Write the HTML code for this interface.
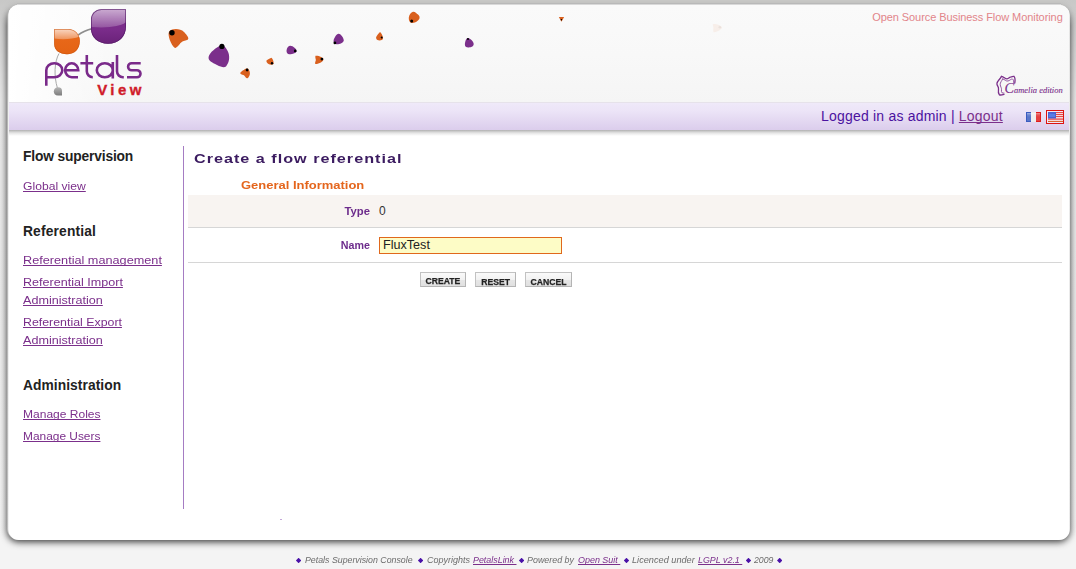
<!DOCTYPE html>
<html>
<head>
<meta charset="utf-8">
<title>Petals View - Create a flow referential</title>
<style>
*{box-sizing:border-box;margin:0;padding:0}
html,body{width:1076px;height:569px;overflow:hidden}
body{font-family:"Liberation Sans",sans-serif;position:relative;
 background:linear-gradient(to bottom,#c8c8c7 0,#d6d6d6 45px,#e9e9e9 100px,#ececec 300px,#f4f4f4 540px,#f4f4f4 569px);}
a{color:#7b2f8b;text-decoration:underline;text-decoration-skip-ink:none}
#wrap{position:absolute;left:8px;top:5px;width:1062px;height:535px;background:linear-gradient(to right,rgba(255,255,255,.78) 0,rgba(255,255,255,.78) 1px,#fff 1px,#fff 1061px,rgba(255,255,255,.72) 1061px);border-radius:11px;overflow:hidden}
#shw{position:absolute;left:0;top:0;width:1076px;height:569px;-webkit-mask-image:linear-gradient(to bottom,rgba(0,0,0,.3) 0,rgba(0,0,0,.4) 6px,#000 26px);mask-image:linear-gradient(to bottom,rgba(0,0,0,.3) 0,rgba(0,0,0,.4) 6px,#000 26px)}
#sh{position:absolute;left:7px;top:5px;width:1063px;height:535px;border-radius:12px;background:rgba(0,0,0,.22);box-shadow:0 2px 7px rgba(0,0,0,.78)}
#topcover{position:absolute;left:17px;top:0;width:1044px;height:5px;z-index:3;background:linear-gradient(to bottom,#c8c8c6 0,#c8c8c6 1px,#c6c6c4 1px,#c6c6c4 2px,#c4c4c2 2px,#c4c4c2 3px,#b9b9b9 3px,#b9b9b9 4px,#d9d9d9 4px,#d9d9d9 5px)}
#head{position:absolute;left:1px;top:0;width:1060px;height:98px;
 background:linear-gradient(to right,#fff 0,rgba(255,255,255,0) 120px),linear-gradient(to bottom,#fafafa 0,#f8f8f8 50%,#f5f5f5 100%)}
#bar{position:absolute;left:1px;top:97px;width:1060px;height:28px;
 background:linear-gradient(to bottom,#e6e2ea 0,#e6e2ea 1px,#efe9f9 1px,#ece4f7 9px,#e4d9f2 18px,#dbcdec 28px)}
#barsh{position:absolute;left:1px;top:125px;width:1060px;height:6px;
 background:linear-gradient(to bottom,rgba(0,0,0,.31) 0,rgba(0,0,0,.2) 1.5px,rgba(0,0,0,.1) 3px,rgba(0,0,0,.03) 5px,rgba(0,0,0,0) 6px)}
.abs{position:absolute;white-space:nowrap;line-height:1}
#slogan{left:864.2px;top:7px;font-size:11px;color:#e2858a;letter-spacing:-.075px}
#login{font-size:14px;color:#4b12a0;letter-spacing:.2px}
#login a{color:#7b2f8b}
h3.side{position:absolute;left:15px;font-size:13.8px;font-weight:bold;color:#222;line-height:1;white-space:nowrap}
a.nav{position:absolute;left:15px;font-size:11.5px;line-height:1;white-space:nowrap;transform-origin:0 50%}
#vline{position:absolute;left:175px;top:141px;width:1px;height:363px;background:#a57cc3}
#title{left:186px;font-size:13.6px;font-weight:bold;color:#3b1b60;letter-spacing:.84px;transform:scaleX(1.19);transform-origin:0 50%}
#sub{left:233px;font-size:11.8px;font-weight:bold;color:#e4651c;transform:scaleX(1.1);transform-origin:0 50%}
.lbl{font-size:10.5px;font-weight:bold;color:#6d2c8c;text-align:right}
.btn{position:absolute;top:267px;height:15px;border:1px solid #c2c2c2;border-right-color:#b4b4b4;border-bottom-color:#b4b4b4;
 background:linear-gradient(to bottom,#fafafa 0,#f2f2f2 50%,#e6e6e6 55%,#e0e0e0 100%);
 font-size:9.4px;font-weight:bold;color:#222;text-align:center;line-height:13px;white-space:nowrap}
.btn span{-webkit-text-stroke:.25px #222;display:inline-block;transform:scaleX(.92);transform-origin:50% 50%;position:relative;top:.5px}
#foot{position:absolute;left:0;top:0;width:1076px;height:569px;pointer-events:none}
.fs{position:absolute;top:554px;font-size:9.8px;font-style:italic;color:#6c6c6c;white-space:nowrap;line-height:12px;transform-origin:0 50%}
a.fs{color:#7b2f8b}
.dm{position:absolute;top:557.7px;width:5.4px;height:5.6px;background:#4a12a8;clip-path:polygon(50% 0,100% 50%,50% 100%,0 50%)}
</style>
</head>
<body>
<div id="shw"><div id="sh"></div></div>
<div id="topcover"></div>
<div id="wrap">
 <div id="head"></div>
 <div id="bar"></div>
 <div id="barsh"></div>

 <svg id="hdr" width="1062" height="130" viewBox="8 5 1062 130" style="position:absolute;left:0;top:0">
  <defs>
   <linearGradient id="gp" x1="0" y1="0" x2="0" y2="1">
    <stop offset="0" stop-color="#7d2f8d"/><stop offset=".6" stop-color="#7a2c8a"/><stop offset="1" stop-color="#6a2279"/>
   </linearGradient>
   <linearGradient id="glp" x1="0" y1="0" x2="0" y2="1">
    <stop offset="0" stop-color="#fff" stop-opacity=".62"/><stop offset="1" stop-color="#fff" stop-opacity=".2"/>
   </linearGradient>
   <linearGradient id="go" x1="0" y1="0" x2="0" y2="1">
    <stop offset="0" stop-color="#ea6a1c"/><stop offset="1" stop-color="#e46314"/>
   </linearGradient>
   <linearGradient id="glo" x1="0" y1="0" x2="0" y2="1">
    <stop offset="0" stop-color="#fff" stop-opacity=".78"/><stop offset="1" stop-color="#fff" stop-opacity=".3"/>
   </linearGradient>
   <linearGradient id="gg" x1="0" y1="0" x2="0" y2="1">
    <stop offset="0" stop-color="#b5b5b5"/><stop offset="1" stop-color="#7c7c7c"/>
   </linearGradient>
  </defs>
  <!-- logo stems -->
  <path d="M78,35.2 Q84,30.5 92.5,28.6" fill="none" stroke="#8e8e8e" stroke-width="1.7"/>
  <path d="M59,53.5 C54.3,62 53.8,76 57.4,88" fill="none" stroke="#a9a9a9" stroke-width="1"/>
  <!-- purple petal -->
  <clipPath id="cpp"><path d="M126,9.2 L126,26 C126,37 118.5,43.7 108,43.7 C98,43.7 91,37.5 91,28.5 L91,19.5 C91,13.5 95.5,9.2 101.5,9.2 Z"/></clipPath>
  <path d="M126,9.2 L126,26 C126,37 118.5,43.7 108,43.7 C98,43.7 91,37.5 91,28.5 L91,19.5 C91,13.5 95.5,9.2 101.5,9.2 Z" fill="url(#gp)"/>
  <g clip-path="url(#cpp)">
   <path d="M90,8 H127 V21.6 C121,26.4 110,28.4 90,27 Z" fill="url(#glp)"/>
   <path d="M126,9.2 L126,26 C126,37 118.5,43.7 108,43.7 C98,43.7 91,37.5 91,28.5 L91,19.5 C91,13.5 95.5,9.2 101.5,9.2 Z" fill="none" stroke="#4f1762" stroke-width="1.6" opacity=".75"/>
  </g>
  <!-- orange petal -->
  <clipPath id="cpo"><path d="M54.2,29 L68,29 C75,29 79.8,34 79.8,41 C79.8,49 74.5,54.3 67,54.3 C59.5,54.3 54.2,50 54.2,44 Z"/></clipPath>
  <path d="M54.2,29 L68,29 C75,29 79.8,34 79.8,41 C79.8,49 74.5,54.3 67,54.3 C59.5,54.3 54.2,50 54.2,44 Z" fill="url(#go)"/>
  <g clip-path="url(#cpo)">
   <path d="M53,28 H81 V36 C73,39.6 62,39.6 53,38.5 Z" fill="url(#glo)"/>
   <path d="M54.2,29 L68,29 C75,29 79.8,34 79.8,41 C79.8,49 74.5,54.3 67,54.3 C59.5,54.3 54.2,50 54.2,44 Z" fill="none" stroke="#c9540f" stroke-width="1.4" opacity=".7"/>
  </g>
  <!-- bud -->
  <path d="M58,87.3 C61,87.3 62,89 62,91 L62,95.5 L58,95.5 C55,95.5 53.8,93.5 53.8,91.5 C53.8,89 55.5,87.3 58,87.3Z" fill="url(#gg)"/>
  <!-- petals wordmark -->
  <g fill="none" stroke="#7a2a8a" stroke-width="2.6">
   <path d="M46.3,85.8 V70.25 A8,7.05 0 0 1 62.3,70.25 A8,7.05 0 0 1 54.3,77.3 H46.3"/>
   <path d="M65.15,70.25 H78.25 A6.55,7.05 0 1 0 71.7,77.3 H78"/>
   <path d="M86.8,55 V71.3 A6,6 0 0 0 92.8,77.3 M80.4,63.2 H93.2"/>
   <path d="M112.8,62.1 V78.5 M112.8,70.25 A8,7.05 0 1 0 104.8,77.3 A8,7.05 0 0 0 112.8,70.25"/>
   <path d="M117,55 V71.3 A6,6 0 0 0 123,77.3 H123.8"/>
   <path d="M140.7,63.2 H131.6 A3.5,3.52 0 0 0 131.6,70.25 H137 A3.5,3.52 0 0 1 137,77.3 H127"/>
  </g>
  <text x="97.2" y="95" font-family="Liberation Sans, sans-serif" font-weight="bold" font-size="15" letter-spacing="3.4" fill="#d01c2a" stroke="#d01c2a" stroke-width=".35">View</text>
  <!-- scattered petals -->
  <g fill="#d9601e">
   <path d="M169.5,31 C172,28.5 180,28 184,32 C186,34 188.5,37 188.3,38.5 C188,40.5 185,40.5 183,41.2 C180.5,42 178.5,46.5 175.5,48 C173,48.5 168,38 168.6,33 Z"/>
   <path d="M246.5,68.5 C248.5,68 250,71 249.9,73.5 C249.8,76 248,78.5 246.9,78.3 C245.5,78 245,75.5 243.5,75 C242,74.6 240,74 240.3,73 C240.6,72 244.5,69 246.5,68.5Z"/>
   <path d="M271.5,57.7 C273,59 274,62 273.5,64 C272.5,65 270,65 268.5,64 C267,63 266,61.5 266.5,60.5 C267.5,59.5 270,58 271.5,57.7Z"/>
   <path d="M315.5,55.8 C319,55.5 323.4,57.5 323.4,59.5 C323.4,61.5 319,64.2 315.2,64 C314.8,62 316,61 315.8,59.8 C315.6,58.5 315,57 315.5,55.8Z"/>
   <path d="M380,32.1 C381.5,33 383.3,37 383,38.8 C382.5,40.5 379,40.8 377.5,40 C376.3,39.3 375.8,38 376.2,37 C376.8,35.5 379,33 380,32.1Z"/>
   <path d="M413,11.8 C415,11.5 416.5,13.5 418,14.5 C419.5,15.5 420,17.5 419.3,19 C418,21.5 414,23.2 411.5,23 C409.5,22.5 408.5,20 408.8,17.5 C409.2,15 411,12.2 413,11.8Z"/>
   <path d="M558.8,17 L564.1,17 L561.5,21.7Z"/>
  </g>
  <g fill="#7b2f8b">
   <path d="M221,45.5 C224,44.5 227,49 228.5,53 C230,58 229,63 226,66.5 C224,68 221,67 217,65 C212,62.5 208,60.5 208.6,57 C209,53 217,46.5 221,45.5 Z"/>
   <path d="M290,45.7 C293,45.5 296.6,49 296.6,51 C296.6,53 292,54.5 289,54.3 C287,54 286.3,52 286.6,50 C287,48 288,46 290,45.7Z"/>
   <path d="M338.5,33.7 C341,33.5 344,38.5 343.8,40.5 C343.5,43 339,44.5 336.5,44.2 C334.5,44 333.3,42.5 333.6,40.5 C334,38 336.5,34 338.5,33.7Z"/>
   <path d="M467.5,38 C470,38 473.7,41.5 473.7,44 C473.7,46.5 471,47.5 468.5,47.4 C466,47.3 464.8,46.5 464.9,44.5 C465,42 466,38.5 467.5,38Z"/>
  </g>
  <g fill="#000">
   <circle cx="172" cy="32.7" r="2.7"/><circle cx="221.9" cy="46.4" r="2.6"/><circle cx="247.1" cy="70" r="1.4"/>
   <circle cx="272" cy="63.2" r="1.2"/><circle cx="295.2" cy="50.9" r="1.3"/><circle cx="321.9" cy="59.1" r="1.4"/>
   <circle cx="334.9" cy="42.9" r="1.4"/><circle cx="381.7" cy="37.6" r="1"/><circle cx="411.7" cy="21.1" r="1.5"/>
   <circle cx="468" cy="38.9" r="1"/><circle cx="561.4" cy="19.8" r=".8"/>
  </g>
  <path d="M713,24 C716,23.5 722,25.5 722,27.5 C722,29.5 716,32.5 713.5,32.3 C712.8,30 713.6,28.5 713.4,27.5 C713.2,26.5 712.5,25 713,24Z" fill="#e8691c" opacity=".07"/><circle cx="719.8" cy="27.3" r="1.3" fill="#000" opacity=".05"/>
  <!-- camelia edition -->
  <g fill="none" stroke="#7b2f8b" stroke-width="1.3" stroke-linecap="round">
   <path d="M1001.5,76.4 C1004,76.8 1005,79 1007,78.9 C1009,78.5 1009.5,76.9 1011.1,76.8 C1012.3,76.6 1013.2,76 1014,76.4 C1015,77.5 1015.2,80.5 1014.8,83"/>
   <path d="M1001.5,76.4 C1000,79.5 996.5,81.5 996.9,83.9 C997.2,86 998.8,86.8 998.5,88.9 C998.2,91 998.3,93.5 999.4,94.8 C1000.8,95.4 1002.5,94.8 1004,94.3"/>
   <path d="M1002.7,78.9 C1005,79.5 1006,81.5 1008,81 C1010,80.5 1011,78.8 1012.5,79 C1013.5,79.5 1013.8,81.5 1013.8,83" stroke-width=".8"/>
   <path d="M1002.7,78.9 C1001.8,81 1000,82.5 1000.2,84.7 C1000.4,86.5 1001.7,88 1001.5,89.7 C1001.4,91 1001.3,92 1001.9,92.7 C1002.7,93.2 1003.4,93.1 1004,93.1" stroke-width=".8"/>
  </g>
  <text x="1004.4" y="92.7" font-family="Liberation Serif, serif" font-style="italic" font-size="9.2" fill="#7b2f8b" stroke="#7b2f8b" stroke-width=".12" textLength="58.3" lengthAdjust="spacingAndGlyphs"><tspan font-size="15.5">C</tspan>amelia edition</text>
  <!-- flags -->
  <defs>
   <linearGradient id="gl" x1="0" y1="0" x2="0" y2="1"><stop offset="0" stop-color="#fff" stop-opacity=".45"/><stop offset=".5" stop-color="#fff" stop-opacity=".1"/><stop offset="1" stop-color="#fff" stop-opacity="0"/></linearGradient>
  </defs>
  <g>
   <rect x="1026" y="112" width="5" height="10" fill="#3a5cc0"/>
   <rect x="1031" y="112" width="5" height="10" fill="#ececec"/>
   <rect x="1036" y="112" width="5" height="10" fill="#e01c1c"/>
   <rect x="1027" y="113" width="13" height="8" fill="#fff" opacity=".16"/>
   <rect x="1027" y="113" width="13" height="4" fill="url(#gl)"/>
  </g>
  <g>
   <rect x="1046.5" y="110.5" width="17" height="13" fill="#efe6f8" stroke="#dd1212" stroke-width="1"/>
   <rect x="1048" y="112" width="15" height="10" fill="#f3d9d9"/>
   <g fill="#e8474a">
    <rect x="1048" y="112" width="15" height="1"/><rect x="1048" y="114" width="15" height="1"/><rect x="1048" y="116" width="15" height="1"/>
    <rect x="1048" y="118.5" width="15" height="1.2"/><rect x="1048" y="121" width="15" height="1" fill="#d9602c"/>
   </g>
   <rect x="1048" y="112" width="8" height="6.5" fill="#4c5fd0"/>
   <rect x="1049" y="113.6" width="6" height="3.4" fill="#5b83ea" opacity=".8"/>
  </g>
 </svg>
 <div id="slogan" class="abs">Open Source Business Flow Monitoring</div>
 <div id="login" class="abs" style="left:813px;top:104px">Logged in as admin | <a href="#">Logout</a></div>

 <h3 class="side" style="top:145px;letter-spacing:-.16px">Flow supervision</h3>
 <a class="nav" href="#" style="top:176px;transform:scaleX(1.056)">Global view</a>
 <h3 class="side" style="top:220px;letter-spacing:.16px">Referential</h3>
 <a class="nav" href="#" style="top:250px;transform:scaleX(1.103)">Referential management</a>
 <a class="nav" href="#" style="top:272px;transform:scaleX(1.093)">Referential Import</a>
 <a class="nav" href="#" style="top:290px;transform:scaleX(1.095)">Administration</a>
 <a class="nav" href="#" style="top:312px;transform:scaleX(1.075)">Referential Export</a>
 <a class="nav" href="#" style="top:330px;transform:scaleX(1.095)">Administration</a>
 <h3 class="side" style="top:374px;letter-spacing:.06px">Administration</h3>
 <a class="nav" href="#" style="top:404px;transform:scaleX(1.045)">Manage Roles</a>
 <a class="nav" href="#" style="top:426px;transform:scaleX(1.035)">Manage Users</a>

 <div id="vline"></div>
 <div id="title" class="abs" style="top:147px">Create a flow referential</div>
 <div id="sub" class="abs" style="top:175px">General Information</div>

 <div style="position:absolute;left:180px;top:190px;width:874px;height:33px;background:#f8f4f1;border-bottom:1px solid #d6d6d6"></div>
 <div class="abs lbl" style="left:262px;width:100px;top:201px;transform:scaleX(1.075);transform-origin:100% 50%">Type</div>
 <div class="abs" style="left:371px;top:200px;font-size:12px;color:#333">0</div>
 <div style="position:absolute;left:180px;top:257px;width:874px;height:1px;background:#d6d6d6"></div>
 <div class="abs lbl" style="left:262px;width:100px;top:235px;transform:scaleX(1.02);transform-origin:100% 50%">Name</div>
 <div style="position:absolute;left:371px;top:232px;width:183px;height:17px;border:1px solid #e0681c;background:#fdfcc6;font-size:12.6px;color:#222;line-height:15px;padding-left:3px;white-space:nowrap">FluxTest</div>

 <div class="btn" style="left:412px;width:46px"><span>CREATE</span></div>
 <div class="btn" style="left:467px;width:41px;padding-top:1px"><span>RESET</span></div>
 <div class="btn" style="left:517px;width:47px;padding-top:1px"><span>CANCEL</span></div>
</div>
<div style="position:absolute;left:280px;top:519px;width:2px;height:1px;background:#c3a8d8"></div>
<div id="foot">
<span class="fs" style="left:305.2px;transform:scaleX(0.898)">Petals Supervision Console</span>
<span class="fs" style="left:427.3px;transform:scaleX(0.918)">Copyrights</span>
<a href="#" class="fs" style="left:473.2px;transform:scaleX(0.907)">PetalsLink&nbsp;</a>
<span class="fs" style="left:527.4px;transform:scaleX(0.908)">Powered by</span>
<a href="#" class="fs" style="left:578.0px;transform:scaleX(0.913)">Open Suit&nbsp;</a>
<span class="fs" style="left:632.4px;transform:scaleX(0.937)">Licenced under</span>
<a href="#" class="fs" style="left:698.1px;transform:scaleX(0.906)">LGPL v2.1&nbsp;</a>
<span class="fs" style="left:754.4px;transform:scaleX(0.889)">2009</span>
<i class="dm" style="left:295.9px"></i>
<i class="dm" style="left:417.9px"></i>
<i class="dm" style="left:518.9px"></i>
<i class="dm" style="left:623.8px"></i>
<i class="dm" style="left:745.8px"></i>
<i class="dm" style="left:777.0px"></i>
</div>
</body>
</html>
